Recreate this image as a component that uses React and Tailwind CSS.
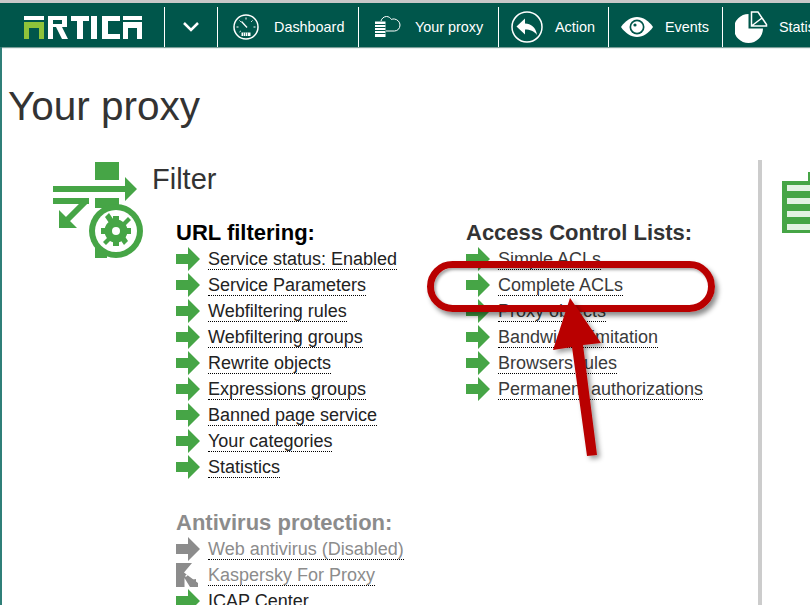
import React from 'react';

const Arrow = ({ color = '#46a546' }) => (
  <svg width="24" height="24" viewBox="0 0 24 24" className="shrink-0">
    <path d="M0 7h12V0l12 12-12 12v-7H0z" fill={color} />
  </svg>
);

const Kaspersky = () => (
  <svg width="24" height="24" viewBox="0 0 24 24" className="shrink-0">
    <path d="M0 0h16L8 9.500 22 20v4h-8L8.500 15v9H0z" fill="#8c8c8c" />
    <path d="M9.500 13.500L19 4" stroke="#fff" strokeWidth="1.200" />
    <path d="M14 17l6-1v7z" fill="#8c8c8c" />
  </svg>
);

const Row = ({ label, muted, icon, dark }) => (
  <div className="flex items-center h-[26px]">
    {icon || <Arrow color={muted ? '#8c8c8c' : '#46a546'} />}
    <span className={`ml-2 text-[18px] leading-[20px] border-b border-dotted border-black whitespace-nowrap ${muted ? 'text-[#8c8c8c]' : dark ? 'text-[#222222]' : 'text-[#3a3a3a]'}`}>{label}</span>
  </div>
);

const Logo = () => (
  <svg width="118" height="23" viewBox="0 0 118 23">
    <path d="M0 0h20v4H0z" fill="#fff" />
    <path d="M0 6h20v17h-5V12H5v11H0z" fill="#8fc33a" />
    <path d="M24 0h19v11h-5l6 12h-6l-6-12h-3v12h-5zM29 4v4h9V4z" fill="#fff" fillRule="evenodd" />
    <path d="M47 0h18v5h-6v18h-6V5h-6z" fill="#fff" />
    <path d="M67 0h6v23h-6z" fill="#fff" />
    <path d="M78 0h18v5H84v13h12v5H78z" fill="#fff" />
    <path d="M99 0h19v4H99z" fill="#fff" />
    <path d="M99 6h19v17h-5V12h-9v11h-5z" fill="#fff" />
  </svg>
);

const Gauge = () => (
  <svg width="26" height="26" viewBox="0 0 26 26" fill="none" stroke="#fff">
    <circle cx="13" cy="13" r="12" strokeWidth="1.500" />
    <path d="M13 3.500v2M6.500 6.500l1.300 1.300M19.500 6.500l-1.300 1.300M3.500 13h2M20.500 13h2M6.500 18l1.300-1" strokeWidth="1" />
    <path d="M8.500 7.500l5.500 6" strokeWidth="1.300" />
    <path d="M8.500 18.500h9v3.500h-9z" fill="#fff" stroke="none" />
    <path d="M10.500 18.500v3.500M12.500 18.500v3.500M14.500 18.500v3.500" stroke="#00564b" strokeWidth=".6" />
  </svg>
);

const ProxyCloud = () => (
  <svg width="27" height="22" viewBox="0 0 27 22" fill="none" stroke="#fff">
    <path d="M1 5.500h10.500V21H1z" fill="#fff" stroke="none" />
    <path d="M1 8.500h10.500M1 11.500h10.500M1 14.500h10.500M1 17.500h10.500" stroke="#00564b" />
    <path d="M7 5c.5-2.500 3-4.500 5.500-4.500 2.200 0 3.800 1.300 5 3 .8-.5 1.800-.7 3-.5 3 .5 5.500 3 5.500 6 0 3.500-2.500 6-5.500 6H12" strokeWidth="1" />
  </svg>
);

const Back = () => (
  <svg width="32" height="32" viewBox="0 0 32 32">
    <circle cx="16" cy="16" r="15" fill="none" stroke="#fff" strokeWidth="1.500" />
    <path d="M5.500 15.500L14 7.500v5c6 0 11 4 12 11.500-3-4-7-5.500-12-5.500v5z" fill="#fff" />
  </svg>
);

const Eye = () => (
  <svg width="32" height="20" viewBox="0 0 32 20">
    <path d="M0 10C4 4 10 0 16 0s12 4 16 10c-4 6-10 10-16 10S4 16 0 10z" fill="#fff" />
    <circle cx="16" cy="10" r="7.500" fill="#00564b" />
    <circle cx="16" cy="10" r="5.800" fill="#fff" />
    <circle cx="14" cy="8" r="1.600" fill="#00564b" />
  </svg>
);

const Pie = () => (
  <svg width="33" height="32" viewBox="0 0 33 32">
    <path d="M13.500 3A14.500 14.500 0 1 0 28 17.500H13.500z" fill="#fff" />
    <path d="M16.500 15V1H23l8.500 12.500V15zM16.500 15L27 7" fill="none" stroke="#fff" strokeWidth="1.500" />
  </svg>
);

const FilterIcon = () => (
  <svg width="90" height="96" viewBox="0 0 90 96" fill="#46a546">
    <path d="M42 0h24v18H42z" />
    <path d="M0 24h72v-9l12 12-12 12v-9H0z" />
    <path d="M0 36h36v6H0z" />
    <path d="M33 39L13 59" stroke="#46a546" strokeWidth="6" />
    <path d="M6 48v18h18z" />
    <path d="M42 36h24v10H42zM42 70h12v26H42z" />
    <circle cx="63" cy="69" r="27" />
    <circle cx="63" cy="69" r="21" fill="#fff" />
    <circle cx="63" cy="69" r="8" fill="none" stroke="#46a546" strokeWidth="7" />
    <path d="M60 54h6v30h-6zM48 66h30v6H48zM52 55l4-4 0 0 19 28-4 4zM75 55l3 3-25 25-3-3z" />
    <circle cx="63" cy="69" r="4" fill="#fff" />
  </svg>
);

const Sep = () => <div className="w-px bg-white self-end h-[40px] shrink-0" />;

const NavItem = ({ icon, label, className }) => (
  <>
    <div className={`flex items-center shrink-0 pt-[3px] ${className}`}>
      {icon}
      <span className="text-[14.4px] text-white whitespace-nowrap relative top-[1px]">{label}</span>
    </div>
    <Sep />
  </>
);

const urlRows = ['Service status: Enabled', 'Service Parameters', 'Webfiltering rules', 'Webfiltering groups', 'Rewrite objects', 'Expressions groups', 'Banned page service', 'Your categories', 'Statistics'];
const aclRows = ['Simple ACLs', 'Complete ACLs', 'Proxy objects', 'Bandwidth limitation', 'Browsers rules', 'Permanent authorizations'];

export default function App() {
  return (
    <div className="relative w-[810px] h-[605px] overflow-hidden bg-white font-['Liberation_Sans',Arial,sans-serif] text-[#333333]">
      <div className="h-[3px] bg-[#c8c8c8]" />
      <header className="flex items-stretch h-[44px] bg-[#00564b] shadow-[0_1px_1px_#7a9e98] overflow-hidden">
        <div className="w-[164px] shrink-0 pl-6 flex items-center pt-[5px]"><Logo /></div>
        <Sep />
        <div className="w-[52px] shrink-0 flex items-center justify-center pt-[3px]">
          <svg width="16" height="10" viewBox="0 0 16 10" fill="none" stroke="#fff" strokeWidth="2.500"><path d="M1 1l7 7 7-7" /></svg>
        </div>
        <Sep />
        <NavItem icon={<Gauge />} label="Dashboard" className="w-[140px] pl-[15px] gap-[15px]" />
        <NavItem icon={<ProxyCloud />} label="Your proxy" className="w-[139px] pl-[15px] gap-[14px]" />
        <NavItem icon={<Back />} label="Action" className="w-[109px] pl-[12px] gap-[12px]" />
        <NavItem icon={<Eye />} label="Events" className="w-[113px] pl-[12px] gap-[12px]" />
        <div className="flex items-center gap-[11px] pl-[12px] pt-[3px] shrink-0">
          <Pie />
          <span className="text-[14.4px] text-white whitespace-nowrap relative top-[1px]">Statistics</span>
        </div>
      </header>

      <div className="border-l-2 border-[#2f7f78] h-[558px]">
        <h1 className="pl-[6px] pt-[36px] text-[40.500px] leading-[46px] text-[#333333]">Your proxy</h1>
        <div className="flex pt-[31px]">
          <div className="w-[756px] shrink-0 flex pl-[51px] pt-[2px]">
            <div className="w-[99px] shrink-0"><FilterIcon /></div>
            <div>
              <h2 className="text-[29px] leading-[34px]">Filter</h2>
              <div className="flex pl-[24px] pt-[24px]">
                <div className="w-[290px] shrink-0">
                  <h3 className="text-[22px] leading-[26px] font-bold text-black">URL filtering:</h3>
                  {urlRows.map(r => <Row key={r} label={r} dark />)}
                  <h3 className="text-[22px] leading-[26px] font-bold text-[#8c8c8c] mt-[30px]">Antivirus protection:</h3>
                  <Row label="Web antivirus (Disabled)" muted />
                  <Row label="Kaspersky For Proxy" muted icon={<Kaspersky />} />
                  <Row label="ICAP Center" dark />
                </div>
                <div>
                  <h3 className="text-[22px] leading-[26px] font-bold">Access Control Lists:</h3>
                  {aclRows.map(r => <Row key={r} label={r} />)}
                </div>
              </div>
            </div>
          </div>
          <div className="w-[4px] h-[460px] bg-[#cccccc] shrink-0" />
          <div className="pl-[20px] pt-[12px]">
            <div className="ml-[26px] w-[2px] h-[9px] bg-[#46a546]" />
            <div className="w-[40px] h-[52px] bg-[#46a546] flex flex-col gap-[7px] pt-[4px] pl-[5px]">
              <div className="h-[6px] shrink-0 bg-white/85" />
              <div className="h-[6px] shrink-0 bg-white/85" />
              <div className="h-[6px] shrink-0 bg-white/85" />
              <div className="h-[6px] shrink-0 bg-white/85" />
            </div>
          </div>
        </div>
      </div>

      {/* annotation over the page */}
      <div className="absolute left-[427px] top-[261px] w-[288px] h-[51px] rounded-[26px] border-[7px] border-[#b90000] shadow-[3px_4px_5px_rgba(0,0,0,0.45),inset_2px_2px_3px_rgba(0,0,0,0.35)]" />
      <svg className="absolute left-0 top-0 pointer-events-none" width="810" height="605" viewBox="0 0 810 605">
        <defs>
          <filter id="sh" x="-30%" y="-30%" width="160%" height="160%">
            <feDropShadow dx="3" dy="3" stdDeviation="2.500" floodColor="#000" floodOpacity="0.4" />
          </filter>
        </defs>
        <path d="M570 298L601 343 583 345 597 455 587 456 572 347 553 350z" fill="#b90000" filter="url(#sh)" />
      </svg>
    </div>
  );
}
